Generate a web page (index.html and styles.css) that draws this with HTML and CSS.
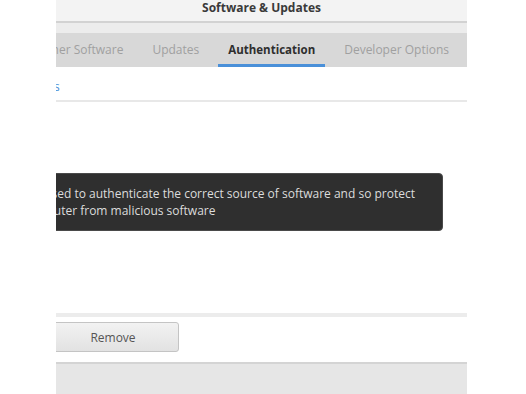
FILE: index.html
```html
<!DOCTYPE html>
<html>
<head>
<meta charset="utf-8">
<link rel="stylesheet" href="styles.css">
</head>
<body>
<div class="window">
  <div class="titlebar">Software &amp; Updates</div>
  <div class="strip"></div>
  <div class="tabbar">
    <span class="tab">Other Software</span>
    <span class="tab">Updates</span>
    <span class="tab active">Authentication</span>
    <span class="tab">Developer Options</span>
  </div>
  <div class="content">
    <div class="label-row"><span class="label">Trusted keys</span></div>
    <div class="sep"></div>
    <div class="list"></div>
    <div class="sep thick"></div>
    <div class="button-row"><button class="btn">Remove</button></div>
    <div class="bottom"></div>
    <div class="tooltip">
      <div class="tip-text">
        <p>Keys are used to authenticate the correct source of software and so protect</p>
        <p>your computer from malicious software</p>
      </div>
    </div>
  </div>
</div>
</body>
</html>
```

FILE: styles.css
```css
* { box-sizing: border-box; }
html, body { margin: 0; padding: 0; background: #ffffff; }
body { font-family: "Open Sans", "Noto Sans", sans-serif; font-size: 12px; }

.window {
  margin-left: 56px;
  width: 411px;
  height: 394px;
  overflow: hidden;
  display: flex;
  flex-direction: column;
  position: relative;
}

.titlebar {
  height: 23px;
  line-height: 16px;
  background: #f3f3f3;
  border-bottom: 2px solid #d2d2d2;
  text-align: center;
  font-weight: 700;
  font-size: 12px;
  color: #3a3a3a;
}

.strip { height: 10px; background: #ececec; }

.tabbar {
  height: 34px;
  background: #d8d8d8;
  display: flex;
  justify-content: flex-end;
  gap: 9px;
  padding-right: 8px;
}
.tab {
  flex: none;
  padding: 2px 10px 0;
  display: flex;
  align-items: center;
  color: #a0a0a0;
  white-space: nowrap;
  border-bottom: 3px solid transparent;
}
.tab.active {
  color: #2e2e2e;
  font-weight: 700;
  font-size: 11.5px;
  border-bottom-color: #4a90d9;
}

.content {
  flex: 1;
  display: flex;
  flex-direction: column;
  background: #ffffff;
  position: relative;
}

.label-row {
  height: 33px;
  display: flex;
  align-items: center;
  padding-top: 6px;
}
.label {
  color: #4a90d9;
  margin-left: -67px;
  white-space: nowrap;
}

.sep { height: 2px; background: #e8e8e8; }
.sep.thick { height: 4px; background: #ececec; }

.list { height: 211px; }

.button-row {
  height: 45px;
  padding-top: 5px;
  display: flex;
}
.btn {
  margin-left: -9px;
  width: 132px;
  height: 30px;
  border: 1px solid #c4c4c4;
  border-radius: 3px;
  background: linear-gradient(#f2f2f2, #e2e2e2);
  font-family: "Open Sans", "Noto Sans", sans-serif;
  font-size: 12px;
  color: #555555;
  padding: 0;
}

.bottom {
  flex: 1;
  background: #e6e6e6;
  border-top: 2px solid #d4d4d4;
}

.tooltip {
  position: absolute;
  top: 106px;
  right: 24px;
  width: 600px;
  height: 58px;
  background: #2f2f2f;
  border: 1px solid #4a4a4a;
  border-radius: 4px;
  padding: 11px 27px 0 0;
  display: flex;
  justify-content: flex-end;
  color: #dcdcdc;
  font-size: 12px;
  line-height: 17px;
}
.tip-text { flex: none; }
.tooltip p { margin: 0; white-space: nowrap; }
```
